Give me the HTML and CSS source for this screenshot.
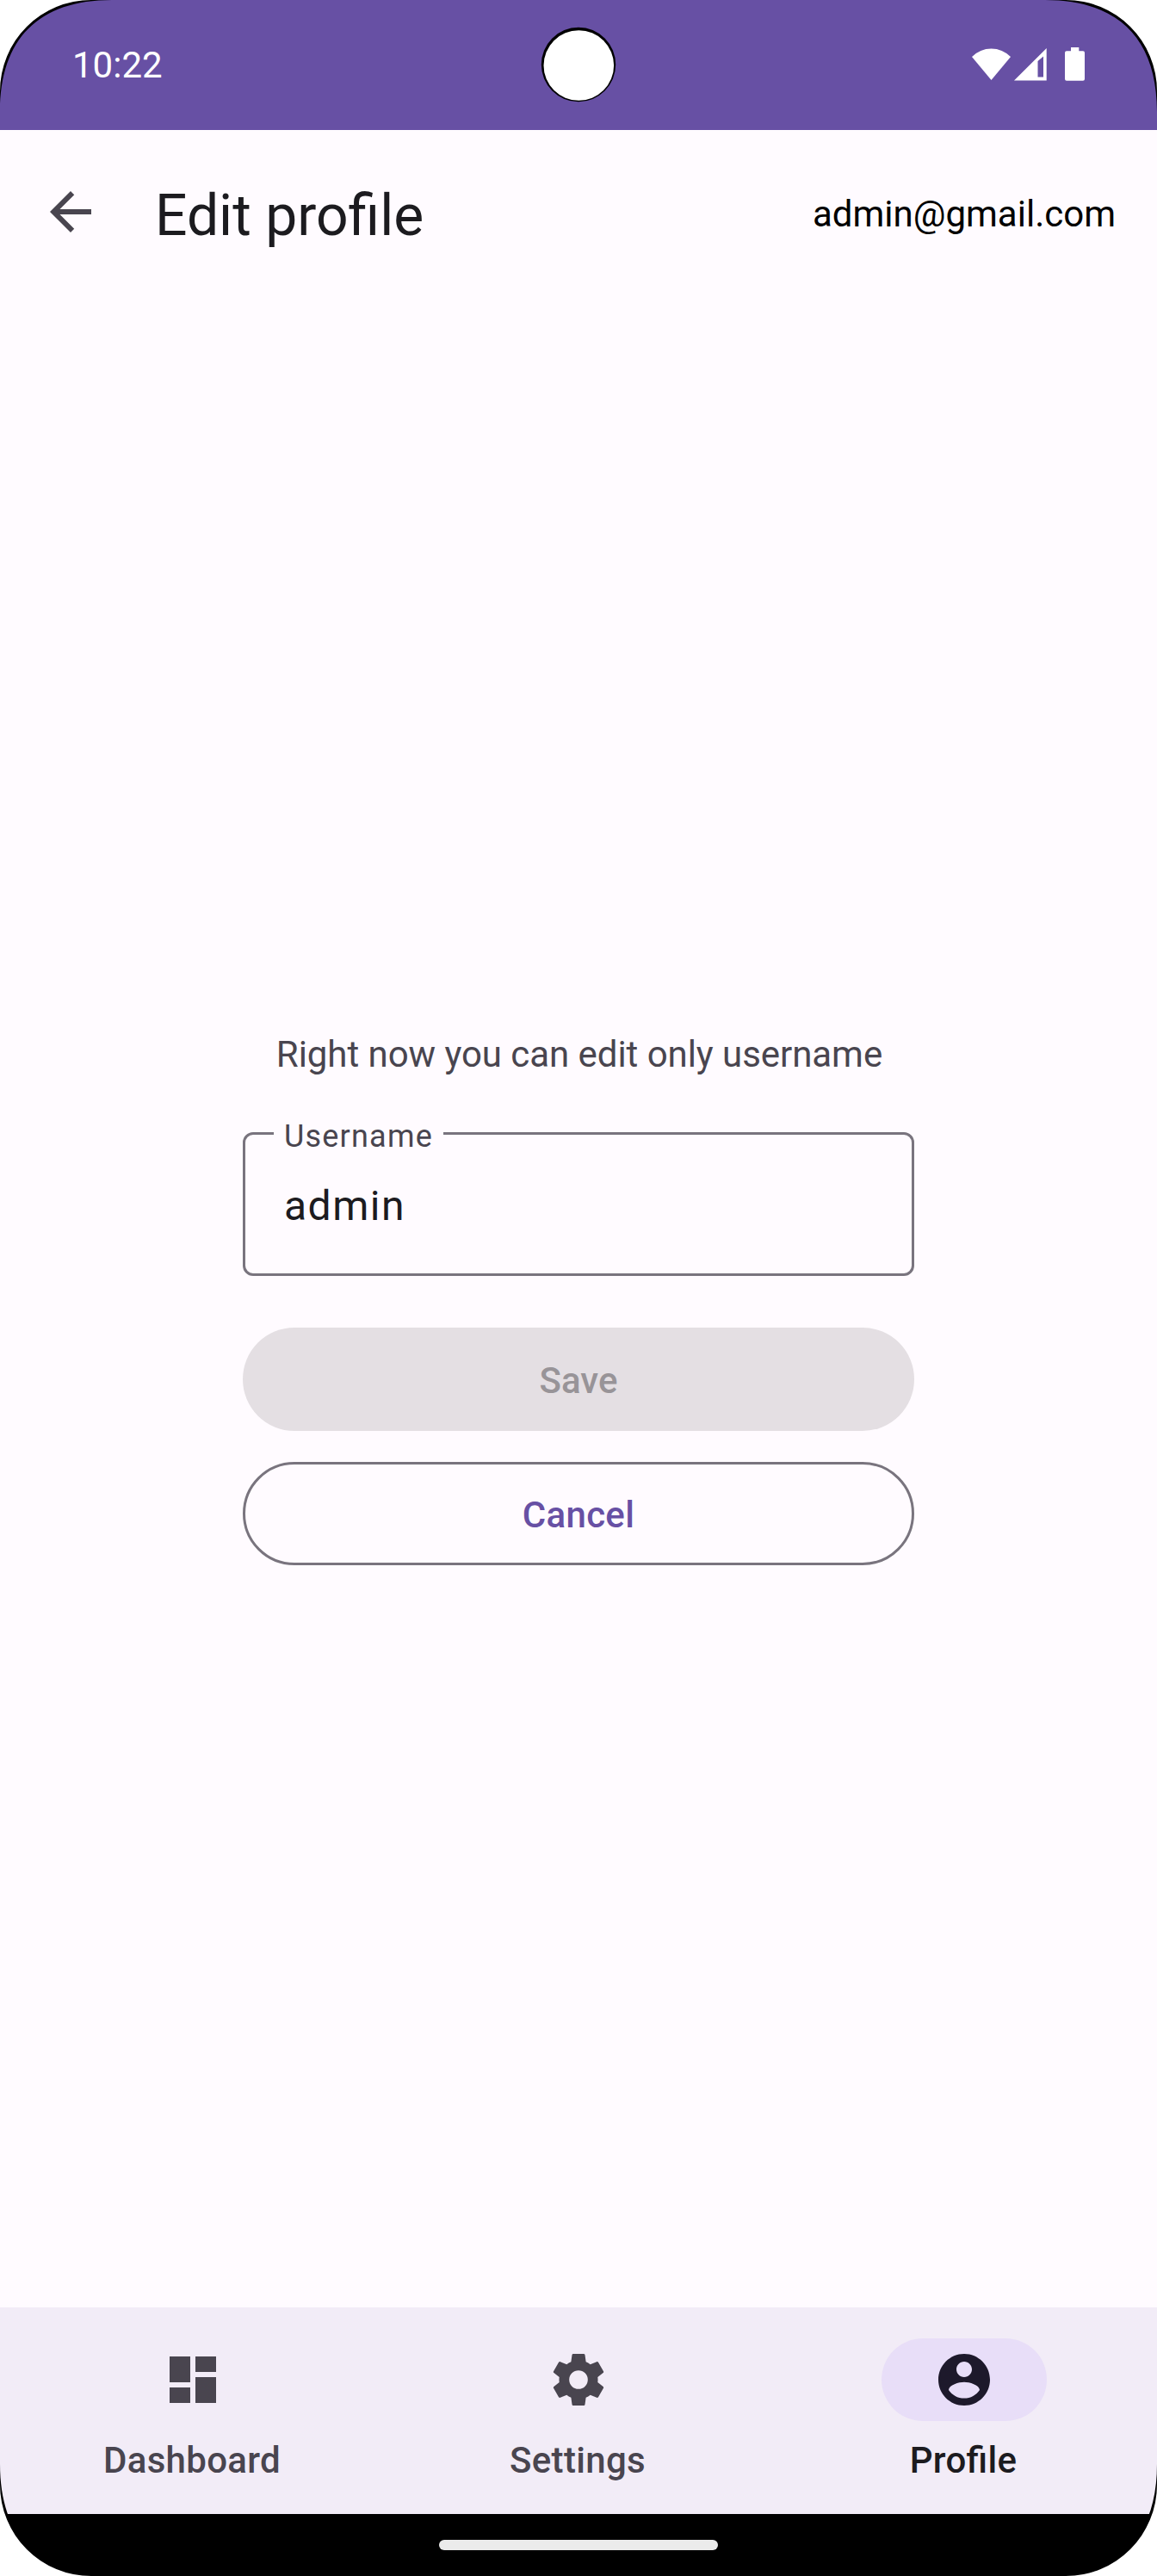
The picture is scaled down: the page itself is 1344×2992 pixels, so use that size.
FILE: index.html
```html
<!DOCTYPE html>
<html lang="en">
<head>
<meta charset="utf-8">
<title>Edit profile</title>
<link rel="stylesheet" href="styles.css">
</head>
<body>
<div class="screen">
  <header class="status-bar">
    <span class="clock">10:22</span>
    <svg class="status-icons" width="134" height="42" viewBox="0 0 134 42" fill="#fff">
      <path d="M25.500 41 3 13.900A31.500 31.500 0 0 1 48 13.900Z"/>
      <path fill-rule="evenodd" d="M52 41.500 89.700 4V41.500ZM79.500 37.500H86V13.500L79.500 19Z"/>
      <path d="M118 3h9.300v4.200h4.700a2 2 0 0 1 2 2V39.700a2 2 0 0 1-2 2H113a2 2 0 0 1-2-2V9.200a2 2 0 0 1 2-2h5Z"/>
    </svg>
  </header>
  <div class="app-bar">
    <svg class="back" width="72" height="72" viewBox="0 0 24 24"><path d="M20 11H7.830l5.590-5.590L12 4l-8 8 8 8 1.410-1.410L7.830 13H20z"/></svg>
    <h1 class="title">Edit profile</h1>
    <span class="email">admin@gmail.com</span>
  </div>
  <main class="content">
    <p class="hint">Right now you can edit only username</p>
    <fieldset class="field">
      <legend class="label">Username</legend>
      <div class="value">admin</div>
    </fieldset>
    <button class="button save" disabled>Save</button>
    <button class="button cancel">Cancel</button>
  </main>
  <nav class="nav">
    <a class="tab"><span class="pill"><svg width="72" height="72" viewBox="0 0 24 24"><path d="M3 13h8V3H3v10zm0 8h8v-6H3v6zm10 0h8V11h-8v10zm0-18v6h8V3h-8z"/></svg></span><span class="tab-text">Dashboard</span></a>
    <a class="tab"><span class="pill"><svg width="72" height="72" viewBox="0 0 24 24"><path d="M19.500 12c0-.340-.030-.660-.070-1l2.110-1.630c.190-.150.240-.420.120-.640l-2-3.460c-.120-.220-.390-.310-.610-.220l-2.490 1c-.520-.390-1.060-.730-1.690-.980l-.370-2.650A.506.506 0 0 0 14 2h-4c-.250 0-.460.180-.500.420l-.370 2.650c-.630.250-1.170.590-1.690.980l-2.490-1c-.220-.090-.490 0-.610.220l-2 3.460c-.130.220-.070.490.120.640L4.570 11c-.040.340-.070.670-.070 1s.030.650.070.970l-2.110 1.660c-.190.150-.250.420-.120.640l2 3.460c.120.220.390.300.610.220l2.490-1.010c.520.400 1.060.740 1.690.990l.370 2.650c.040.240.250.420.500.420h4c.250 0 .460-.180.500-.420l.370-2.650c.630-.260 1.170-.590 1.690-.990l2.490 1.010c.220.080.490 0 .610-.220l2-3.460c.120-.220.070-.490-.120-.640l-2.110-1.660c.040-.320.070-.640.070-.970zM12 15.600a3.600 3.600 0 1 1 0-7.200 3.600 3.600 0 0 1 0 7.200z"/></svg></span><span class="tab-text">Settings</span></a>
    <a class="tab active"><span class="pill"><svg width="72" height="72" viewBox="0 0 24 24"><path d="M12 2C6.480 2 2 6.480 2 12s4.480 10 10 10 10-4.480 10-10S17.520 2 12 2zm0 3c1.660 0 3 1.340 3 3s-1.340 3-3 3-3-1.340-3-3 1.340-3 3-3zm0 14.200c-2.500 0-4.710-1.280-6-3.220.030-1.990 4-3.080 6-3.080 1.990 0 5.970 1.090 6 3.080-1.290 1.940-3.500 3.220-6 3.220z"/></svg></span><span class="tab-text">Profile</span></a>
  </nav>
  <div class="gesture-bar"><span class="handle"></span></div>

  <svg class="bezel" width="1344" height="2992" viewBox="0 0 1344 2992">
    <defs>
      <g id="corner">
        <path fill="#000" d="M0 0V130C0 45 45 0 130 0Z"/>
        <path fill="#fff" d="M0 0V106A106 106 0 0 1 106 0Z"/>
      </g>
    </defs>
    <use href="#corner"/>
    <use href="#corner" transform="translate(1344 0) scale(-1 1)"/>
    <use href="#corner" transform="translate(0 2992) scale(1 -1)"/>
    <use href="#corner" transform="translate(1344 2992) scale(-1 -1)"/>
    <circle cx="672" cy="75" r="43.200" fill="#000"/>
    <circle cx="672.300" cy="76" r="40.800" fill="#fff"/>
  </svg>
</div>
</body>
</html>
```
FILE: styles.css
```css
* { box-sizing: border-box; }
body { margin: 0; background: #fff; font-family: Roboto, sans-serif; }
.screen {
  position: relative;
  width: 1344px;
  height: 2992px;
  overflow: hidden;
  display: flex;
  flex-direction: column;
  background: #fffbff;
  color: #1c1b1f;
}
.status-bar {
  height: 151px;
  background: #6750a4;
  display: flex;
  justify-content: space-between;
  align-items: flex-start;
  padding: 51px 84px 0;
}
.status-icons { margin-top: 1px; }
.clock { color: #fff; font-size: 42px; line-height: 49px; }
.app-bar {
  height: 192px;
  display: flex;
  align-items: center;
  padding: 0 48px 0 46px;
}
.back { fill: #49454f; margin-top: -2px; }
.title { margin: 7px 0 0 62px; font-size: 66px; font-weight: 400; line-height: 84px; }
.email { margin: 3px 0 0 auto; font-size: 42px; line-height: 60px; color: #000; }
.bezel { position: absolute; inset: 0; pointer-events: none; }
.content {
  flex: 1;
  width: 780px;
  margin: 0 auto;
  padding-top: 852px;
  display: flex;
  flex-direction: column;
}
.hint {
  margin: 0;
  padding-left: 2px;
  text-align: center;
  color: #49454f;
  font-size: 42px;
  line-height: 59px;
  letter-spacing: -.05px;
}
.field {
  margin: 43px 0 0;
  min-width: 0;
  height: 185px;
  border: 3px solid #79747e;
  border-radius: 12px;
  padding: 0 45px 0 33px;
}
.label {
  padding: 0 12px;
  height: 39px;
  color: #49454f;
  font-size: 36px;
  line-height: 46px;
  letter-spacing: 1.2px;
}
.value {
  padding: 29px 12px 0;
  font-size: 48px;
  line-height: 71px;
  letter-spacing: 1.5px;
}
.button {
  height: 120px;
  width: 100%;
  flex: none;
  border: 0;
  border-radius: 60px;
  padding: 3px 0 0;
  font: 500 42px/60px Roboto, sans-serif;
  letter-spacing: .3px;
}
.save { margin-top: 60px; background: #e4dfe3; color: #989498; letter-spacing: .1px; }
.cancel { margin-top: 36px; background: transparent; border: 3px solid #79747e; color: #6750a4; }
.nav { height: 240px; display: flex; background: #f2ecf7; }
.tab {
  flex: 1;
  display: flex;
  flex-direction: column;
  align-items: center;
  padding-top: 36px;
  color: #49454f;
}
.pill {
  width: 192px;
  height: 96px;
  border-radius: 48px;
  display: flex;
  align-items: center;
  justify-content: center;
}
.pill svg { fill: currentColor; }
.tab-text {
  margin: 16px 2px 0 0;
  font-size: 42px;
  font-weight: 500;
  line-height: 60px;
  letter-spacing: .3px;
  font-feature-settings: "liga" 1;
}
.active .pill { background: #e8def8; color: #1d192b; }
.active .tab-text { color: #1c1b1f; }
.gesture-bar {
  height: 72px;
  background: #000;
  display: flex;
  align-items: center;
  justify-content: center;
}
.handle { width: 324px; height: 12px; border-radius: 6px; background: #ebebeb; }
```
